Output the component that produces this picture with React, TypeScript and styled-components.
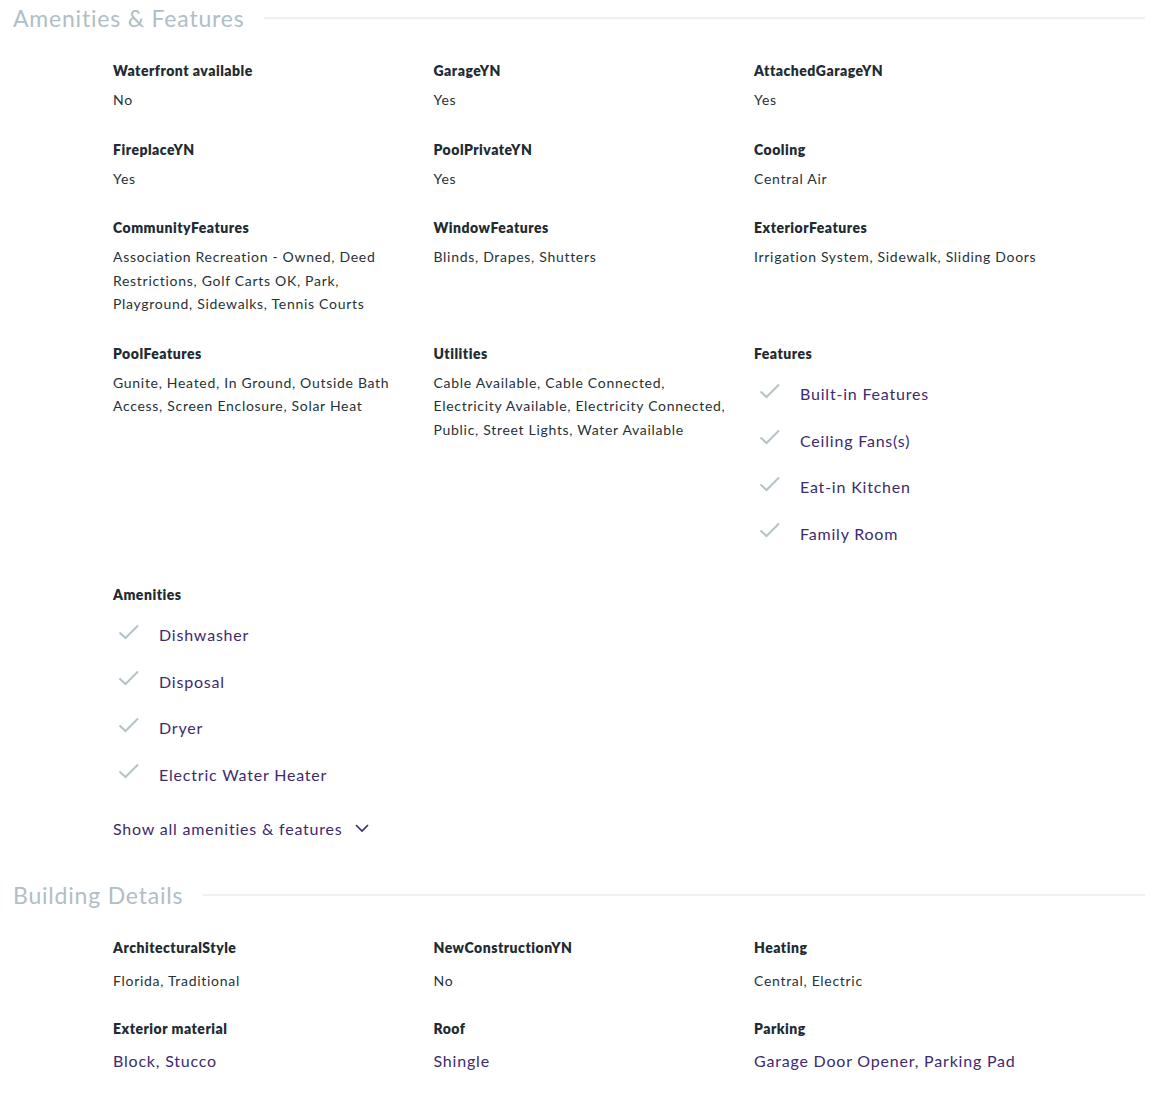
import styled, { createGlobalStyle } from "styled-components";

type Detail = { label: string; value?: string; items?: string[]; link?: boolean };

const amenities: Detail[] = [
  { label: "Waterfront available", value: "No" },
  { label: "GarageYN", value: "Yes" },
  { label: "AttachedGarageYN", value: "Yes" },
  { label: "FireplaceYN", value: "Yes" },
  { label: "PoolPrivateYN", value: "Yes" },
  { label: "Cooling", value: "Central Air" },
  {
    label: "CommunityFeatures",
    value:
      "Association Recreation - Owned, Deed Restrictions, Golf Carts OK, Park, Playground, Sidewalks, Tennis Courts",
  },
  { label: "WindowFeatures", value: "Blinds, Drapes, Shutters" },
  { label: "ExteriorFeatures", value: "Irrigation System, Sidewalk, Sliding Doors" },
  {
    label: "PoolFeatures",
    value: "Gunite, Heated, In Ground, Outside Bath Access, Screen Enclosure, Solar Heat",
  },
  {
    label: "Utilities",
    value:
      "Cable Available, Cable Connected, Electricity Available, Electricity Connected, Public, Street Lights, Water Available",
  },
  {
    label: "Features",
    items: ["Built-in Features", "Ceiling Fans(s)", "Eat-in Kitchen", "Family Room"],
  },
  {
    label: "Amenities",
    items: ["Dishwasher", "Disposal", "Dryer", "Electric Water Heater"],
  },
];

const building: Detail[] = [
  { label: "ArchitecturalStyle", value: "Florida, Traditional" },
  { label: "NewConstructionYN", value: "No" },
  { label: "Heating", value: "Central, Electric" },
  { label: "Exterior material", value: "Block, Stucco", link: true },
  { label: "Roof", value: "Shingle", link: true },
  { label: "Parking", value: "Garage Door Opener, Parking Pad", link: true },
];

const CheckIcon = () => (
  <svg width="22" height="16" viewBox="0 0 22 16" fill="none">
    <path d="M1.5 8.5L7.5 14L20 1.5" stroke="#b4c2c9" strokeWidth="2" />
  </svg>
);

const ChevronDown = () => (
  <svg width="14" height="9" viewBox="0 0 14 9" fill="none">
    <path d="M1 1L7 7L13 1" stroke="#3d2a70" strokeWidth="1.6" />
  </svg>
);

const DetailCell = ({ d, gap }: { d: Detail; gap: number }) => (
  <Cell>
    <Label>{d.label}</Label>
    {d.items ? (
      <CheckList>
        {d.items.map((item) => (
          <CheckItem key={item}>
            <CheckIcon />
            <span>{item}</span>
          </CheckItem>
        ))}
      </CheckList>
    ) : (
      <Value $gap={d.link ? gap - 1 : gap} $link={d.link}>
        {d.value}
      </Value>
    )}
  </Cell>
);

const App = () => (
  <>
    <GlobalStyle />
    <Page>
      <Section>
        <Header>
          <Title>Amenities &amp; Features</Title>
          <Rule />
        </Header>
        <Grid>
          {amenities.map((d) => (
            <DetailCell key={d.label} d={d} gap={7} />
          ))}
        </Grid>
        <ShowAll>
          Show all amenities &amp; features
          <ChevronDown />
        </ShowAll>
      </Section>

      <Section $top={39}>
        <Header>
          <Title>Building Details</Title>
          <Rule />
        </Header>
        <Grid $rowGap={27}>
          {building.map((d) => (
            <DetailCell key={d.label} d={d} gap={11} />
          ))}
        </Grid>
      </Section>
    </Page>
  </>
);

const GlobalStyle = createGlobalStyle`
  body {
    margin: 0;
    background: #ffffff;
    font-family: "Lato", "Noto Sans", sans-serif;
    color: #263238;
  }
`;

const Page = styled.div`
  padding: 3px 7px 30px 13px;
`;

const Section = styled.section<{ $top?: number }>`
  margin-top: ${({ $top }) => $top ?? 0}px;
`;

const Header = styled.div`
  display: flex;
  align-items: center;
  gap: 20px;
  height: 30px;
`;

const Title = styled.h2`
  margin: 0;
  font-size: 23px;
  font-weight: 400;
  letter-spacing: 0.8px;
  color: #b0bec5;
  white-space: nowrap;
`;

const Rule = styled.div`
  flex: 1;
  height: 2px;
  background: #eef1f3;
`;

const Grid = styled.div<{ $rowGap?: number }>`
  display: grid;
  grid-template-columns: repeat(3, 320.5px);
  row-gap: ${({ $rowGap }) => $rowGap ?? 28}px;
  margin: 28px 0 0 100px;
`;

const Cell = styled.div`
  display: flex;
  flex-direction: column;
  padding-right: 20px;
`;

const Label = styled.div`
  font-size: 14px;
  font-weight: 800;
  line-height: 20px;
  letter-spacing: 0.5px;
  color: #212b31;
`;

const Value = styled.div<{ $gap: number; $link?: boolean }>`
  margin-top: ${({ $gap }) => $gap}px;
  font-size: ${({ $link }) => ($link ? 16 : 14)}px;
  line-height: ${({ $link }) => ($link ? 24 : 23.5)}px;
  letter-spacing: ${({ $link }) => ($link ? 0.8 : 0.7)}px;
  color: ${({ $link }) => ($link ? "#3d2a70" : "#263238")};
`;

const CheckList = styled.ul`
  list-style: none;
  margin: 7px 0 0;
  padding: 0;
`;

const CheckItem = styled.li`
  display: flex;
  align-items: center;
  gap: 19px;
  height: 46.5px;
  padding-left: 5px;
  font-size: 16px;
  letter-spacing: 0.8px;
  color: #3d2a70;

  svg {
    margin-top: -6px;
  }
`;

const ShowAll = styled.button`
  display: flex;
  align-items: center;
  gap: 12px;
  margin: 19px 0 0 100px;
  padding: 0;
  border: none;
  background: none;
  font-family: inherit;
  font-size: 16px;
  line-height: 24px;
  letter-spacing: 0.8px;
  color: #3d2a70;
  cursor: pointer;
`;

export default App;
